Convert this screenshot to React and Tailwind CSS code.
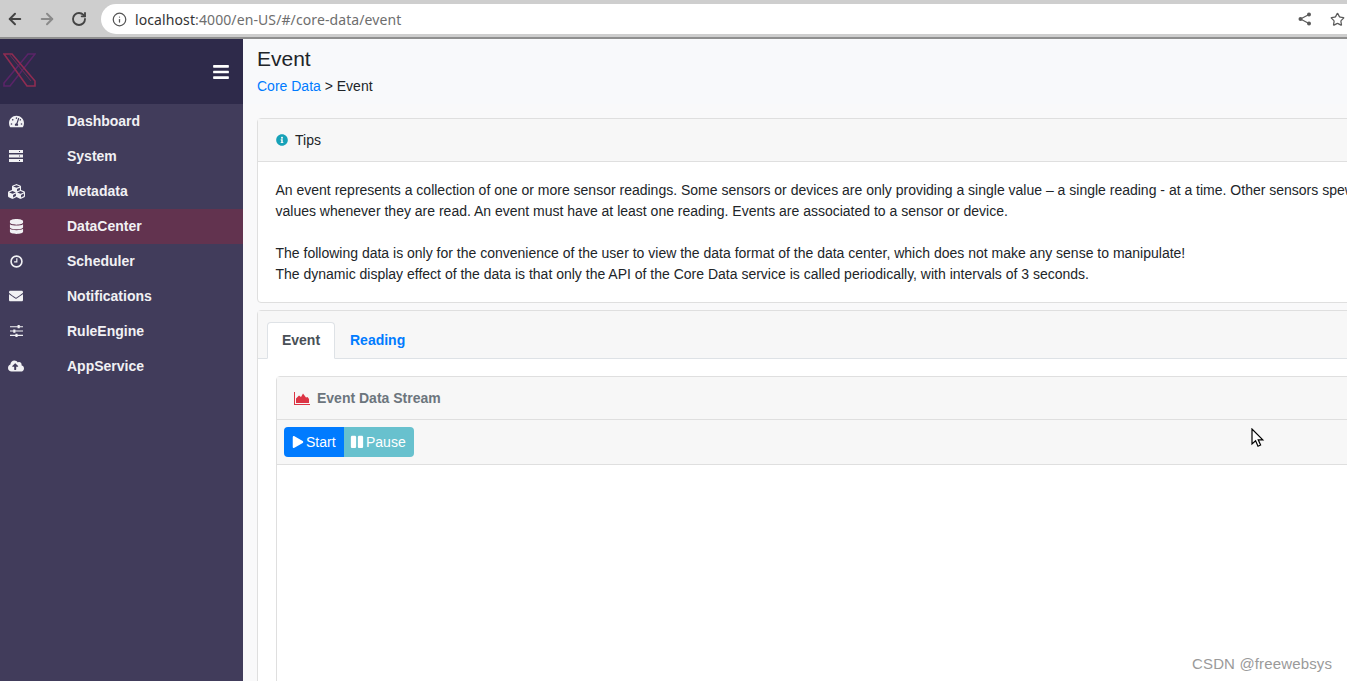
import React from 'react';
import {
  FaTachometerAlt, FaCubes, FaDatabase, FaEnvelope,
  FaCloudUploadAlt, FaBars, FaInfoCircle, FaPlay, FaPause,
} from 'react-icons/fa';
import { ArrowLeft, ArrowRight, RotateCw, Info, Star } from 'lucide-react';

// the old FA4 server glyph: three bars with a notch at the right
const ServerIcon = () => (
  <svg viewBox="0 0 14 12" className="w-[14px] h-[12px]" fill="currentColor">
    <path d="M0 0h14v3H0Zm10 1v1h1V1ZM0 4.5h14v3H0Zm10 1v1h1v-1ZM0 9h14v3H0Zm10 1v1h1v-1Z" fillRule="evenodd" />
  </svg>
);

const ClockIcon = () => (
  <svg viewBox="0 0 12 12" className="w-[13px] h-[13px]" fill="none" stroke="currentColor">
    <circle cx="6" cy="6" r="5" strokeWidth="1.5" />
    <path d="M6.3 3v3.3H3.8" strokeWidth="1.1" />
  </svg>
);

const SlidersIcon = () => (
  <svg viewBox="0 0 12 11" className="w-[13px] h-[12px]" fill="currentColor">
    <path d="M0 1h12v1H0ZM0 5h12v1H0ZM0 9h12v1H0Z" />
    <path d="M7 0h2v3H7ZM3 4h2v3H3ZM5 8h2v3H5Z" />
  </svg>
);

const AreaIcon = () => (
  <svg viewBox="0 0 16 13" className="w-[16px] h-[13px] mr-[7px] text-[#dc3545]" fill="currentColor">
    <path d="M0 0h1v12h15v1H0Z" />
    <path d="M2 11V6.5L5 3.5l2 1.5 2-3.5 3 4 1.5-.5 1.5 2V11Z" />
  </svg>
);

const navItems = [
  { label: 'Dashboard', icon: <FaTachometerAlt size={15} /> },
  { label: 'System', icon: <ServerIcon /> },
  { label: 'Metadata', icon: <FaCubes size={17} /> },
  { label: 'DataCenter', icon: <FaDatabase size={15} />, active: true },
  { label: 'Scheduler', icon: <ClockIcon /> },
  { label: 'Notifications', icon: <FaEnvelope size={14} /> },
  { label: 'RuleEngine', icon: <SlidersIcon /> },
  { label: 'AppService', icon: <FaCloudUploadAlt size={16} /> },
];

const BrowserBar = () => (
  <div className="h-[39px] shrink-0 bg-[#cecece] border-b-2 border-[#8f8f8f] pt-[4px] flex items-start">
    <div className="w-[101px] h-[30px] shrink-0 flex items-center text-[#444]">
      <ArrowLeft size={18} strokeWidth={2.6} className="ml-[6px]" />
      <ArrowRight size={18} strokeWidth={2.6} className="ml-[14px] text-[#8a8a8a]" />
      <RotateCw size={16} strokeWidth={2.8} className="ml-[15px]" />
    </div>
    <div className="flex-1 h-[30px] bg-white rounded-l-[15px] flex items-center text-[14px] tracking-[0.1px] font-['Noto_Sans',sans-serif]">
      <Info size={15} strokeWidth={2} className="ml-[11px] text-[#555]" />
      <span className="ml-[8px] text-[#333]">localhost</span>
      <span className="text-[#6e6e6e]">:4000/en-US/#/core-data/event</span>
      <svg viewBox="0 0 14 14" className="ml-auto mr-[18px] w-[14px] h-[14px] text-[#5a5a5a]" fill="currentColor">
        <circle cx="11" cy="2.5" r="2" />
        <circle cx="2.5" cy="7" r="2" />
        <circle cx="11" cy="11.5" r="2" />
        <path d="M11 2.5 2.5 7l8.5 4.5" fill="none" stroke="currentColor" strokeWidth="1.2" />
      </svg>
      <Star size={15} strokeWidth={2} className="mr-[2px] text-[#5a5a5a]" />
    </div>
  </div>
);

const Sidebar = () => (
  <aside className="w-[243px] shrink-0 bg-[#413c5b] text-[#f1f1f4]">
    <div className="h-[65px] bg-[#2e2a4a] flex items-center justify-between pl-[3px] pr-[13px]">
      <svg viewBox="0 0 33 34" className="w-[33px] h-[34px] mt-[-4px]" fill="none">
        <path d="M32 1h-7L1 30v3h6Z" stroke="#5a2468" strokeWidth="1.6" />
        <path d="M1 1h8l23 27v5h-8Z" stroke="#8f2c52" strokeWidth="1.6" />
        <path d="M6 1 28 28" stroke="#6f2a55" strokeWidth="1" />
      </svg>
      <FaBars size={18} className="text-white" />
    </div>
    <nav className="flex flex-col">
      {navItems.map(({ label, icon, active }) => (
        <div
          key={label}
          className={`h-[35px] flex items-center text-[14px] font-bold ${active ? 'bg-[#62334f]' : ''}`}
        >
          <span className="w-[67px] shrink-0 pl-[7px] -mt-px">
            <span className="w-[18px] flex justify-center">{icon}</span>
          </span>
          {label}
        </div>
      ))}
    </nav>
  </aside>
);

const TipsCard = () => (
  <div className="border border-[#dfdfdf] rounded-[4px] bg-white">
    <div className="h-[43px] bg-[#f7f7f7] border-b border-[#dfdfdf] flex items-center pl-[18px] text-[14px] text-[#212529]">
      <FaInfoCircle size={12} className="text-[#17a2b8] mr-[7px]" />
      Tips
    </div>
    <div className="pt-[18px] pb-[17px] pl-[17.5px] text-[14px] leading-[21px] text-[#212529] whitespace-nowrap">
      <p>An event represents a collection of one or more sensor readings. Some sensors or devices are only providing a single value – a single reading - at a time. Other sensors spew multiple</p>
      <p>values whenever they are read. An event must have at least one reading. Events are associated to a sensor or device.</p>
      <p className="h-[21px]" />
      <p>The following data is only for the convenience of the user to view the data format of the data center, which does not make any sense to manipulate!</p>
      <p>The dynamic display effect of the data is that only the API of the Core Data service is called periodically, with intervals of 3 seconds.</p>
    </div>
  </div>
);

const DataCard = () => (
  <div className="mt-[7px] border border-[#dfdfdf] rounded-[4px] bg-white flex-1 min-h-[400px]">
    <div className="h-[48px] bg-[#f7f7f7] border-b border-[#dee2e6] flex items-end pl-[9px] text-[14px] font-bold">
      <div className="h-[37px] w-[68px] -mb-px bg-white border border-[#dee2e6] border-b-white rounded-t-[4px] flex items-center justify-center text-[#495057]">
        Event
      </div>
      <div className="h-[37px] ml-[15px] pt-px flex items-center text-[#007bff]">Reading</div>
    </div>
    <div className="pt-[17px] pl-[18px]">
      <div className="border border-[#dfdfdf] rounded-t-[4px] h-[400px] bg-white">
        <div className="h-[43px] bg-[#f7f7f7] border-b border-[#dfdfdf] flex items-center pl-[17px] text-[14px] font-bold text-[#6c757d]">
          <AreaIcon />
          Event Data Stream
        </div>
        <div className="h-[45px] bg-[#f7f7f7] border-b border-[#dfdfdf] flex items-center pl-[7px] text-[14px] text-white">
          <button className="h-[30px] w-[60px] bg-[#007bff] rounded-l-[4px] flex items-center pl-[8px] gap-[2px]">
            <FaPlay size={12} />
            Start
          </button>
          <button className="h-[30px] w-[70px] bg-[#68c1ce] rounded-r-[4px] flex items-center pl-[6px] gap-[2px]">
            <FaPause size={14} />
            Pause
          </button>
        </div>
      </div>
    </div>
  </div>
);

const App = () => (
  <div className="relative w-[1347px] h-[681px] overflow-hidden flex flex-col bg-white font-['Liberation_Sans',sans-serif]">
    <BrowserBar />
    <div className="flex flex-1 min-h-0">
      <Sidebar />
      <main className="flex-1 min-w-0 overflow-hidden bg-[#f9f9fa]">
        <div className="h-[65px] bg-[#f8f9fb] pl-[14px] pt-[7px]">
          <h1 className="text-[21px] leading-[26px] text-[#212529]">Event</h1>
          <div className="mt-[4px] text-[14px] leading-[20px] text-[#212529]">
            <span className="text-[#007bff]">Core Data</span> &gt; Event
          </div>
        </div>
        <div className="w-[1200px] pl-[14px] pt-[14px] flex flex-col">
          <TipsCard />
          <DataCard />
        </div>
      </main>
    </div>

    {/* mouse pointer caught in the shot */}
    <svg viewBox="0 0 14 20" className="absolute left-[1250.5px] top-[427.5px] w-[14px] h-[20px]">
      <path d="M1 1v15l3.6-3.2 2.4 5.4 2.6-1.2-2.4-5.2h4.6Z" fill="#fff" stroke="#000" strokeWidth="1.2" />
    </svg>

    {/* watermark */}
    <div className="absolute left-[1192px] top-[656px] text-[15px] leading-[16px] tracking-[0.15px] text-[#9a9a9a]">
      CSDN @freewebsys
    </div>
  </div>
);

export default App;
